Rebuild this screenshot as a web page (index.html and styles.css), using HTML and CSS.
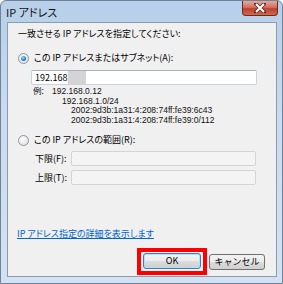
FILE: index.html
```html
<!DOCTYPE html>
<html lang="ja">
<head>
    <meta charset="UTF-8">
    <title>IP アドレス</title>
    <link rel="stylesheet" href="styles.css">
</head>
<body>
    <div class="window">
        <div class="titlebar">
            <span class="title">IP アドレス</span>
            <span class="close">
                <svg width="12" height="10" viewBox="0 0 12 10">
                    <path d="M2 1 L10 9 M10 1 L2 9" stroke="#5a2a22" stroke-width="3.6" stroke-linecap="square"/>
                    <path d="M2 1 L10 9 M10 1 L2 9" stroke="#ffffff" stroke-width="2"/>
                </svg>
            </span>
        </div>
        <div class="client">
            <p class="prompt">一致させる IP アドレスを指定してください:</p>

            <div class="option first">
                <span class="radio checked"></span>
                <span>この IP アドレスまたはサブネット(A):</span>
            </div>
            <div class="field address">
                <span>192.168</span><span class="blur"></span>
            </div>

            <div class="examples">
                <div class="ex-line"><span class="ex-label">例:</span><span>192.168.0.12</span></div>
                <div class="ex-line indent-1">192.168.1.0/24</div>
                <div class="ex-line indent-2">2002:9d3b:1a31:4:208:74ff:fe39:6c43</div>
                <div class="ex-line indent-2">2002:9d3b:1a31:4:208:74ff:fe39:0/112</div>
            </div>

            <div class="option second">
                <span class="radio"></span>
                <span>この IP アドレスの範囲(R):</span>
            </div>
            <div class="range-row">
                <span class="range-label">下限(F):</span>
                <span class="field disabled"></span>
            </div>
            <div class="range-row">
                <span class="range-label">上限(T):</span>
                <span class="field disabled"></span>
            </div>

            <a class="link" href="#">IP アドレス指定の詳細を表示します</a>

            <div class="buttons">
                <span class="highlight">
                    <button class="btn default">OK</button>
                </span>
                <button class="btn">キャンセル</button>
            </div>
        </div>
    </div>
</body>
</html>
```

FILE: styles.css
```css
body {
    margin: 0;
    background-color: #ffffff;
    font-family: "Noto Sans CJK JP", sans-serif;
    font-feature-settings: "palt";
    color: #000;
}
.window {
    width: 281px;
    height: 282px;
    border: 1px solid #6f8297;
    border-radius: 6px 6px 0 0;
    background: linear-gradient(#b7cfe9, #c9dbef 40%, #d3e2f3);
    display: flex;
    flex-direction: column;
}
.titlebar {
    height: 21px;
    display: flex;
    align-items: flex-start;
    justify-content: space-between;
}
.title {
    margin: 4px 0 0 5px;
    font-size: 11px;
    line-height: 14px;
    color: #111;
}
.close {
    width: 34px;
    height: 14px;
    margin-right: 4px;
    border: 1px solid #6b2b22;
    border-top: none;
    border-radius: 0 0 4px 4px;
    background: linear-gradient(#e5a99c, #d0715f 45%, #c0402e 55%, #d06a4f);
    display: flex;
    align-items: center;
    justify-content: center;
}
.client {
    margin: 0 5px 0 6px;
    height: 253px;
    border: 1px solid #8c9caf;
    background-color: #f0f0f0;
    display: flex;
    flex-direction: column;
    font-size: 9px;
    line-height: 12px;
}
.prompt {
    margin: 5px 0 0 10px;
}
.option {
    display: flex;
    align-items: center;
    gap: 5px;
    margin-left: 10px;
}
.option.first {
    margin-top: 12px;
}
.option.second {
    margin-top: 9px;
}
.radio {
    width: 9px;
    height: 9px;
    border: 1px solid #8f959c;
    border-radius: 50%;
    background: radial-gradient(circle at 40% 35%, #ffffff, #d6d8dc);
    position: relative;
}
.radio.checked::after {
    content: "";
    position: absolute;
    left: 2px;
    top: 2px;
    width: 5px;
    height: 5px;
    border-radius: 50%;
    background: radial-gradient(circle at 40% 35%, #9fe0ff, #1d7bc3 60%, #0d4f8a);
}
.field {
    height: 13px;
    border: 1px solid #c9d3dd;
    border-top-color: #a9b1bb;
    border-radius: 2px;
    background-color: #ffffff;
    display: flex;
    align-items: center;
}
.field.address {
    margin: 6px 0 0 23px;
    padding-left: 3px;
    width: 221px;
}
.blur {
    width: 18px;
    height: 13px;
    margin-left: 1px;
    background-color: #d4d4d4;
}
.examples {
    margin-top: 1px;
    font-family: "Liberation Sans", sans-serif;
    font-size: 8.5px;
    line-height: 9.5px;
    color: #111;
}
.ex-line {
    margin-left: 25px;
    white-space: nowrap;
}
.ex-label {
    display: inline-block;
    width: 19px;
    font-family: "Noto Sans CJK JP", sans-serif;
    font-size: 8.5px;
    line-height: 9.5px;
}
.indent-1 {
    margin-left: 54px;
}
.indent-2 {
    margin-left: 63px;
}
.range-row {
    display: flex;
    align-items: center;
    margin-top: 5px;
}
.range-row + .range-row {
    margin-top: 4px;
}
.range-label {
    width: 36px;
    margin-left: 27px;
}
.field.disabled {
    width: 183px;
    background-color: #f4f4f4;
    border-color: #d5d5d5;
}
.link {
    margin: 43px 0 0 9px;
    color: #0066cc;
    text-decoration: underline;
    align-self: flex-start;
}
.buttons {
    margin: 8px 11px 0 0;
    display: flex;
    justify-content: flex-end;
    align-items: center;
    gap: 2px;
}
.highlight {
    border: 4px solid #ff0000;
    padding: 1px 2px 2px;
    display: flex;
}
.btn {
    width: 56px;
    height: 16px;
    padding: 0;
    border: 1px solid #707070;
    border-radius: 3px;
    background: linear-gradient(#f2f2f2, #ebebeb 50%, #dddddd 50%, #cfcfcf);
    font-family: inherit;
    font-size: 9px;
    line-height: 12px;
    color: #000;
}
.btn.default {
    width: 58px;
    border-color: #3c7fb1;
    box-shadow: inset 0 0 0 1px #aee3fa;
}
```
